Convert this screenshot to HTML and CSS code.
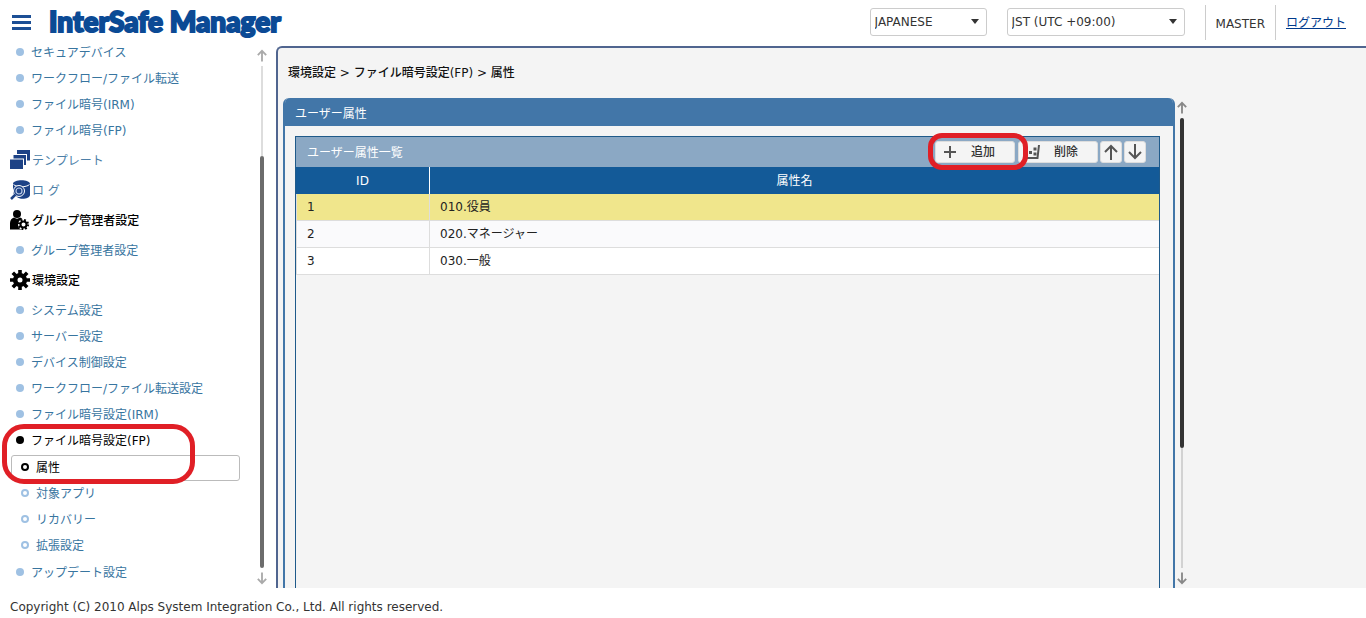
FILE: index.html
```html
<!DOCTYPE html>
<html lang="ja">
<head>
<meta charset="utf-8">
<title>InterSafe Manager</title>
<link rel="stylesheet" href="styles.css">
</head>
<body>
<div class="app">
  <header class="header">
    <button class="menu" type="button" aria-label="メニュー"><span></span><span></span><span></span></button>
    <div class="logo">InterSafe Manager</div>
    <div class="tools">
      <div class="select lang"><select aria-label="言語"><option>JAPANESE</option></select></div>
      <div class="select zone"><select aria-label="タイムゾーン"><option>JST (UTC +09:00)</option></select></div>
      <div class="account"><span class="user">MASTER</span><a class="logout" href="#">ログアウト</a></div>
    </div>
  </header>

  <div class="body">
    <aside class="sidebar">
      <nav class="nav">
        <ul class="list scrolled">
          <li><a class="item" href="#"><i class="dot"></i>セキュアデバイス</a></li>
          <li><a class="item" href="#"><i class="dot"></i>ワークフロー/ファイル転送</a></li>
          <li><a class="item" href="#"><i class="dot"></i>ファイル暗号(IRM)</a></li>
          <li><a class="item" href="#"><i class="dot"></i>ファイル暗号(FP)</a></li>
        </ul>
        <a class="group" href="#">
          <svg class="icon" viewBox="0 0 20 20"><path fill="#1d4286" d="M7 0h13v10.500h-3V4H7zM3.500 5H16v10h-2V8.500H3.500zM0 9.500h13V19H0z"/></svg>テンプレート</a>
        <a class="group" href="#">
          <svg class="icon" viewBox="0 0 20 20"><path fill="#1d4286" d="M3 4c0-5 17-5 17 0v11c0 4-10 5-13 2L3 14z"/><path d="M3.500 4.500c3 3 13 3 16 0" fill="none" stroke="#fff"/><path d="M6 14 1 19" stroke="#fff" stroke-width="4"/><circle cx="9" cy="11" r="5.500" fill="#1d4286" stroke="#fff"/><circle cx="9" cy="11" r="3" fill="none" stroke="#b9c9e5" stroke-width="1.200"/><path d="M5.500 14.500 1 19" stroke="#1d4286" stroke-width="2.500"/></svg>ロ グ</a>
        <a class="group strong" href="#">
          <svg class="icon" viewBox="0 0 20 20"><circle cx="7" cy="4" r="4"/><path d="M0 19.500V13c0-3 2-5 4-5.500 2 1.500 4 1.500 6 0 2 .5 3 2 3 3.500v8.500z"/><circle cx="13.500" cy="14.500" r="5.500" fill="#fff"/><circle cx="13.500" cy="14.500" r="3" fill="none" stroke="#000" stroke-width="2"/><circle cx="13.500" cy="14.500" r="4.600" fill="none" stroke="#000" stroke-width="2" stroke-dasharray="1.810 1.810"/></svg>グループ管理者設定</a>
        <ul class="list spaced">
          <li><a class="item" href="#"><i class="dot"></i>グループ管理者設定</a></li>
        </ul>
        <a class="group strong" href="#">
          <svg class="icon" viewBox="0 0 20 20"><circle cx="10" cy="10" r="4.800" fill="none" stroke="#000" stroke-width="4.600"/><g stroke="#000" stroke-width="3.600"><path d="M10 0v4M10 16v4M0 10h4M16 10h4M2.800 2.800l3 3M14.200 14.200l3 3M17.200 2.800l-3 3M5.800 14.200l-3 3"/></g></svg>環境設定</a>
        <ul class="list spaced">
          <li><a class="item" href="#"><i class="dot"></i>システム設定</a></li>
          <li><a class="item" href="#"><i class="dot"></i>サーバー設定</a></li>
          <li><a class="item" href="#"><i class="dot"></i>デバイス制御設定</a></li>
          <li><a class="item" href="#"><i class="dot"></i>ワークフロー/ファイル転送設定</a></li>
          <li><a class="item" href="#"><i class="dot"></i>ファイル暗号設定(IRM)</a></li>
          <li class="current">
            <a class="item active" href="#"><i class="dot"></i>ファイル暗号設定(FP)</a>
            <ul class="sub">
              <li><a class="item active selected" href="#"><i class="ring"></i>属性</a></li>
              <li><a class="item" href="#"><i class="ring"></i>対象アプリ</a></li>
              <li><a class="item" href="#"><i class="ring"></i>リカバリー</a></li>
              <li><a class="item" href="#"><i class="ring"></i>拡張設定</a></li>
            </ul>
            <span class="mark mark-nav"></span>
          </li>
          <li><a class="item" href="#"><i class="dot"></i>アップデート設定</a></li>
        </ul>
      </nav>
      <div class="scroll scroll-nav">
        <svg class="arrow" viewBox="0 0 12 14"><path d="M6 13.500V2M1.500 6.500 6 2l4.500 4.500"/></svg>
        <div class="rail rail-top"></div>
        <div class="thumb"></div>
        <svg class="arrow" viewBox="0 0 12 14"><path d="M6 .5V12M1.500 7.500 6 12l4.500-4.500"/></svg>
      </div>
    </aside>

    <main class="main">
      <h1 class="crumbs">環境設定 &gt; ファイル暗号設定(FP) &gt; 属性</h1>
      <div class="content">
        <section class="panel">
          <h2 class="panel-title">ユーザー属性</h2>
          <div class="panel-body">
            <div class="grid">
              <div class="toolbar">
                <h3 class="toolbar-title">ユーザー属性一覧</h3>
                <div class="buttons">
                  <div class="marked">
                    <button class="btn wide" type="button"><svg class="bicon" viewBox="0 0 14 14"><path d="M7 1v12M1 7h12"/></svg>追加</button>
                    <span class="mark mark-add"></span>
                  </div>
                  <button class="btn wide" type="button"><svg class="bicon" viewBox="0 0 14 14"><path d="M0 13h11.500L13 0"/><path d="M3 7.500h3M7.500 4h3M7.500 9h3" stroke-width="3"/></svg>削除</button>
                  <button class="btn" type="button" aria-label="上へ"><svg class="bmove" viewBox="0 0 16 16"><path d="M8 16V2M2 8l6-6 6 6"/></svg></button>
                  <button class="btn" type="button" aria-label="下へ"><svg class="bmove" viewBox="0 0 16 16"><path d="M8 0v14M2 8l6 6 6-6"/></svg></button>
                </div>
              </div>
              <table class="table">
                <thead><tr><th class="col-id">ID</th><th>属性名</th></tr></thead>
                <tbody>
                  <tr class="picked"><td>1</td><td>010.役員</td></tr>
                  <tr class="alt"><td>2</td><td>020.マネージャー</td></tr>
                  <tr><td>3</td><td>030.一般</td></tr>
                </tbody>
              </table>
            </div>
          </div>
        </section>
        <div class="scroll scroll-main">
          <svg class="arrow" viewBox="0 0 12 14"><path d="M6 13.500V2M1.500 6.500 6 2l4.500 4.500"/></svg>
          <div class="thumb"></div>
          <div class="rail"></div>
          <svg class="arrow" viewBox="0 0 12 14"><path d="M6 .5V12M1.500 7.500 6 12l4.500-4.500"/></svg>
        </div>
      </div>
    </main>
  </div>

  <footer class="footer">Copyright (C) 2010 Alps System Integration Co., Ltd. All rights reserved.</footer>
</div>
</body>
</html>
```
FILE: styles.css
```css
* { box-sizing: border-box; }

body {
  margin: 0;
  background: #fff;
  color: #333;
  font: 12px/18px "DejaVu Sans", "Noto Sans CJK JP", sans-serif;
}

h1, h2, h3, ul { margin: 0; padding: 0; font-size: 12px; font-weight: 400; list-style: none; }
button, select { font: inherit; color: inherit; }
a { text-decoration: none; }

.app { display: flex; flex-direction: column; height: 100vh; overflow: hidden; }

/* Header */
.header { display: flex; align-items: center; height: 46px; flex: none; padding: 0 20px 2px 12px; }
.menu { display: flex; flex-direction: column; gap: 3px; width: 19px; padding: 0; border: 0; background: none; }
.menu span { height: 3px; background: #1c4f95; }
.logo {
  margin-left: 18px;
  padding-bottom: 2px;
  color: #0b4a95;
  font: 900 28px/40px Lato, "Open Sans", sans-serif;
  white-space: nowrap;
  -webkit-text-stroke: 2px #0b4a95;
}
.tools { display: flex; align-items: center; gap: 20px; margin-left: auto; }
.select { position: relative; height: 28px; }
.select select {
  appearance: none;
  width: 100%;
  height: 28px;
  padding: 0 4px;
  border: 1px solid #ccc;
  border-radius: 3px;
  background: #fff;
}
.select::after {
  content: "";
  position: absolute;
  top: 11px;
  right: 8px;
  border: 4px solid transparent;
  border-top: 5px solid #333;
  border-bottom: 0;
}
.lang { width: 117px; }
.zone { width: 178px; }
.account { display: flex; align-items: center; height: 35px; border-left: 1px solid #ccc; }
.user { padding: 10px 10px 7px; border-right: 1px solid #ccc; }
.logout { padding: 2px 0 0 10px; color: #003a8c; text-decoration: underline; }

/* Sidebar */
.body { display: flex; flex: 1; min-height: 0; }
.sidebar { display: flex; width: 276px; flex: none; }
.nav { flex: 1; overflow: hidden; }
.scrolled { margin-top: -6px; padding-bottom: 2px; }
.spaced { padding: 2px 0; }
.item { display: flex; align-items: center; gap: 7px; height: 26px; padding-left: 16px; color: #38759f; white-space: nowrap; }
.dot, .ring { width: 8px; height: 8px; margin-bottom: 2px; border-radius: 50%; }
.dot { background: #9fc1e3; }
.ring { border: 2px solid #9fc1e3; }
.active { color: #000; }
.active .dot { background: #000; }
.active .ring { border-color: #000; }
.sub { padding: 1px 0; }
.sub .item { padding-left: 21px; }
.sub .selected { margin-left: 11px; padding-left: 9px; border: 1px solid #bbb; border-radius: 3px; }
.group { display: flex; align-items: center; gap: 2px; height: 30px; padding-left: 10px; color: #4d7fa8; }
.strong { color: #000; font-weight: 500; }
.icon { width: 20px; height: 20px; margin-bottom: 2px; }
.current { position: relative; }

/* Highlight outlines */
.mark { position: absolute; z-index: 2; border: 5px solid #e01f26; pointer-events: none; }
.mark-nav { top: -4px; left: 2px; width: 193px; height: 60px; border-radius: 22px; }
.mark-add { top: -8px; left: -7px; width: 100px; height: 37px; border-radius: 14px; }

/* Scroll bars */
.scroll { display: flex; flex-direction: column; align-items: center; gap: 4px; width: 12px; }
.scroll .arrow { width: 12px; height: 13px; flex: none; fill: none; stroke: #aaa; stroke-width: 2; }
.scroll-nav { width: 36px; padding: 3px 0 3px 8px; }
.rail { flex: 1; width: 2px; background: #d2d2d2; }
.rail-top { flex: 90; margin-bottom: -4px; background: #ddd; }
.thumb { width: 4px; border-radius: 2px; }
.scroll-nav .thumb { flex: 412; background: #6c6c6c; }
.scroll-main { padding: 3px 0; width: 14px; }
.scroll-main .arrow { stroke: #888; }
.scroll-main .thumb { flex: 330; margin-bottom: -4px; background: #333; }
.scroll-main .rail { flex: 120; }

/* Main area */
.main {
  display: flex;
  flex-direction: column;
  flex: 1;
  min-width: 0;
  border: 2px solid #50658f;
  border-width: 2px 0 0 2px;
  border-top-left-radius: 6px;
  background: #f4f4f4;
}
.crumbs { height: 50px; padding: 16px 10px; color: #111; font-weight: 500; }
.content { display: flex; flex: 1; min-height: 0; padding-left: 5px; }
.panel { display: flex; flex-direction: column; flex: 0 1 892px; border: 2px solid #4276a8; border-width: 0 2px; border-radius: 6px 6px 0 0; }
.panel-title { height: 28px; padding: 7px 10px 3px; background: #4276a8; color: #fff; border-radius: 5px 5px 0 0; }
.panel-body { display: flex; flex: 1; padding: 10px 13px 0 10px; }
.grid { flex: 1; border: 1px solid #1f5a8a; border-bottom: 0; }
.toolbar { display: flex; align-items: center; justify-content: space-between; height: 30px; padding: 0 13px 0 11px; background: #8ba8c4; }
.toolbar-title { padding-top: 2px; color: #fff; }
.buttons { display: flex; gap: 2px; }
.marked { position: relative; margin-right: 1px; }
.btn {
  display: flex;
  align-items: center;
  justify-content: center;
  width: 22px;
  height: 22px;
  padding: 0;
  border: 1px solid #ddd;
  border-radius: 3px;
  background: #f4f4f4;
  color: #333;
  font-weight: 500;
}
.wide { width: 80px; gap: 14px; padding-right: 12px; }
.bicon { width: 14px; height: 14px; fill: none; stroke: #555; stroke-width: 2; }
.bmove { width: 16px; height: 16px; fill: none; stroke: #555; stroke-width: 2; }
.table { width: 100%; border-collapse: separate; border-spacing: 0; table-layout: fixed; background: #fff; }
.table th { height: 27px; padding: 0; border-left: 1px solid #fff; background: #135a98; color: #fff; font-weight: 400; }
.table th.col-id { width: 133px; border-left: 0; }
.table td { height: 27px; padding: 0 10px; border: 1px solid #ddd; border-width: 0 0 1px 1px; color: #222; }
.picked { background: #f0e68c; }
.alt { background: #fafafc; }

.footer { flex: none; height: 30px; padding: 10px; }
```
